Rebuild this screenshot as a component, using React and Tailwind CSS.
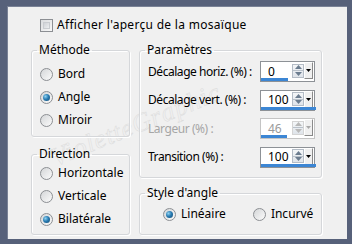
import React from 'react';

const Radio = ({ checked, label, disabled }) => (
  <div className="flex items-center h-[14px] whitespace-nowrap">
    <span className="w-[13px] h-[13px] rounded-full border border-[#8c8f93] bg-gradient-to-br from-[#d4d6d8] to-[#fbfbfb] flex items-center justify-center shrink-0">
      {checked && (
        <span className="w-[7px] h-[7px] rounded-full bg-[radial-gradient(circle_at_35%_35%,#8fd2f2_0%,#2a7db3_45%,#10456e_100%)]" />
      )}
    </span>
    <span className={`ml-[5px] ${disabled ? 'text-[#a0a0a0]' : 'text-[#000]'}`}>{label}</span>
  </div>
);

const SpinBox = ({ value, bar, disabled }) => {
  const tri = disabled ? '#b8b8b8' : '#6b7c8f';
  return (
    <div className={`relative w-[55px] h-[21px] shrink-0 bg-white border ${disabled ? 'border-[#c4c4c4]' : 'border-[#8d9196]'} flex items-center`}>
      <span className={`pl-[7px] flex-1 leading-none ${disabled ? 'text-[#9a9a9a]' : 'text-[#000]'}`}>{value}</span>
      <div className={`w-[12px] h-[14px] mb-[2px] flex flex-col border ${disabled ? 'border-[#d4d4d4]' : 'border-[#b4bcc6]'} bg-gradient-to-b from-[#f4f6f8] to-[#dfe4ea]`}>
        <div className="flex-1 flex items-center justify-center border-b border-[#b9c1ca]">
          <svg width="7" height="4" viewBox="0 0 7 4"><path d="M0 4 L3.5 0 L7 4 Z" fill={tri} /></svg>
        </div>
        <div className="flex-1 flex items-center justify-center">
          <svg width="7" height="4" viewBox="0 0 7 4"><path d="M0 0 L3.5 4 L7 0 Z" fill={tri} /></svg>
        </div>
      </div>
      <div className="w-[9px] h-[17px] mb-[2px] mr-[1px] bg-[#f0f0f0] border-l border-t border-white border-r border-b border-r-[#8a8a8a] border-b-[#8a8a8a] flex items-center justify-center">
        <svg width="5" height="3" viewBox="0 0 5 3"><path d="M0 0 L2.5 3 L5 0 Z" fill={disabled ? '#a8a8a8' : '#000'} /></svg>
      </div>
      <div className="absolute left-0 bottom-0 h-[3px] bg-[#3c86d4]" style={{ width: bar }} />
    </div>
  );
};

const Group = ({ title, className, children }) => (
  <fieldset className={`border border-[#d5d7da] rounded-[3px] shadow-[inset_1px_1px_0_#fff,1px_1px_0_#fff] ${className}`}>
    <legend className="ml-[5px] px-[2px] leading-[14px] whitespace-nowrap">{title}</legend>
    {children}
  </fieldset>
);

const Row = ({ label, children, disabled }) => (
  <div className="flex items-center justify-between whitespace-nowrap">
    <span className={`tracking-[-0.45px] ${disabled ? 'text-[#a6a6a6]' : ''}`}>{label}</span>
    {children}
  </div>
);

export default function App() {
  return (
    <div className="w-[352px] h-[244px] bg-[#57617a] pt-[6px] pl-[7px] pr-[5px] pb-[5px] overflow-hidden text-[12px] text-black font-['Noto_Sans',sans-serif]">
      <div className="relative h-full bg-[#f0f0f0] border-l border-t border-[#7a8296]">
        {/* checkbox */}
        <div className="flex items-center pt-[11px] pl-[32px] h-[25px]">
          <span className="w-[13px] h-[13px] border border-[#8c8f93] bg-gradient-to-br from-[#dadcde] to-[#f8f8f8] p-[2px] shrink-0">
            <span className="block w-full h-full border border-[#c9ccd0] bg-gradient-to-br from-[#cfd2d6] to-[#eceef0]" />
          </span>
          <span className="ml-[4px] tracking-[0.3px]">Afficher l'aperçu de la mosaïque</span>
        </div>

        {/* watermark */}
        <span className="absolute left-[44px] top-[132px] -rotate-[22deg] origin-left pointer-events-none font-['Liberation_Serif',serif] italic text-[26px] text-transparent [-webkit-text-stroke:0.5px_#dcdcdc] tracking-[1px]">
          VioletteGraphic
        </span>

        <div className="relative flex mt-[11px] pl-[23px]">
          {/* left column */}
          <div className="w-[99px] flex flex-col">
            <Group title="Méthode" className="h-[94px]">
              <div className="flex flex-col gap-[9px] pl-[8px] pt-[10px]">
                <Radio label="Bord" />
                <Radio label="Angle" checked />
                <Radio label="Miroir" />
              </div>
            </Group>
            <Group title="Direction" className="h-[88px] mt-[10px]">
              <div className="flex flex-col gap-[9px] pl-[8px] pt-[5px]">
                <Radio label="Horizontale" />
                <Radio label="Verticale" />
                <Radio label="Bilatérale" checked />
              </div>
            </Group>
          </div>

          {/* right column */}
          <div className="w-[183px] ml-[9px] flex flex-col">
            <Group title="Paramètres" className="h-[135px]">
              <div className="flex flex-col gap-[7.5px] pl-[8px] pr-[6px] pt-[4px]">
                <Row label="Décalage horiz. (%) :">
                  <SpinBox value="0" bar="27px" />
                </Row>
                <Row label="Décalage vert. (%) :">
                  <SpinBox value="100" bar="55px" />
                </Row>
                <Row label="Largeur (%) :" disabled>
                  <SpinBox value="46" bar="26px" disabled />
                </Row>
                <Row label="Transition (%) :">
                  <SpinBox value="100" bar="55px" />
                </Row>
              </div>
            </Group>
            <Group title="Style d'angle" className="h-[49px] mt-[8px]">
              <div className="flex gap-[27px] pl-[23px] pt-[7px]">
                <Radio label="Linéaire" checked />
                <Radio label="Incurvé" />
              </div>
            </Group>
          </div>
        </div>
      </div>
    </div>
  );
}
